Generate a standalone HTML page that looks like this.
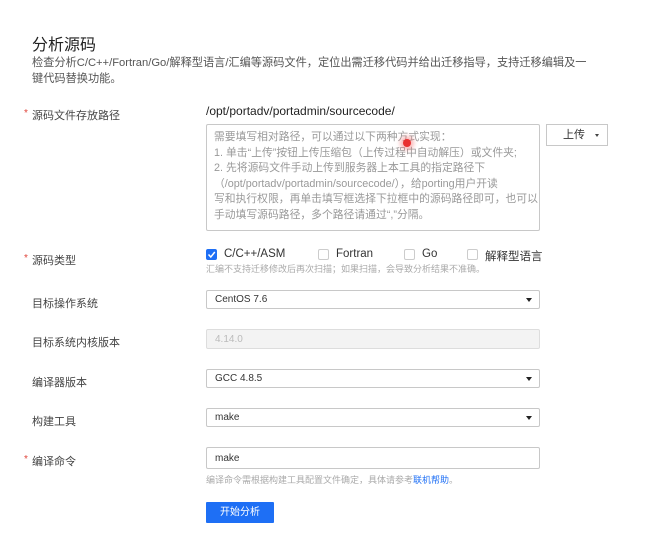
<!DOCTYPE html><html><head><meta charset="utf-8"><style>
*{margin:0;padding:0;box-sizing:border-box}
body{width:652px;height:539px;background:#fff;font-family:"Liberation Sans","Noto Sans CJK SC",sans-serif;color:#333;position:relative;overflow:hidden}
.a{position:absolute;white-space:nowrap}
.lab{font-size:11px;color:#444;left:32px}
.star{position:absolute;left:-8px;color:#e0453b;font-size:10px;top:1px}
.box{position:absolute;left:206px;width:334px;border:1px solid #c8c8c8;border-radius:2px;font-size:10px;color:#333;padding-left:8px;background:#fff;display:flex;align-items:center}
.arr{position:absolute;right:7px;top:7px;width:0;height:0;border-left:3px solid transparent;border-right:3px solid transparent;border-top:4px solid #222}
.cb{position:absolute;width:11px;height:11px;border:1px solid #ccc;border-radius:2px;background:#fff}
.ck{position:absolute;font-size:11.5px;color:#333;top:248px}
</style></head><body>
<div class="a" style="left:32px;top:31px;font-size:16px;color:#222">分析源码</div>
<div class="a" style="left:32px;top:55px;font-size:11.2px;color:#555;line-height:16px">检查分析C/C++/Fortran/Go/解释型语言/汇编等源码文件，定位出需迁移代码并给出迁移指导，支持迁移编辑及一<br>键代码替换功能。</div>
<div class="a lab" style="top:107px"><span class="star">*</span>源码文件存放路径</div>
<div class="a" style="left:206px;top:104px;font-size:12px;color:#222">/opt/portadv/portadmin/sourcecode/</div>
<div class="a" style="left:206px;top:124px;width:334px;height:107px;border:1px solid #c8c8c8;border-radius:2px;padding:5px 7px;font-size:10.8px;color:#999;line-height:15.6px;overflow:hidden">需要填写相对路径，可以通过以下两种方式实现：<br>1. 单击“上传”按钮上传压缩包（上传过程中自动解压）或文件夹;<br>2. 先将源码文件手动上传到服务器上本工具的指定路径下<br>（/opt/portadv/portadmin/sourcecode/），给porting用户开读<br>写和执行权限，再单击填写框选择下拉框中的源码路径即可，也可以<br>手动填写源码路径，多个路径请通过“,”分隔。</div>
<div class="a" style="left:403px;top:139px;width:8px;height:8px;border-radius:50%;background:#e83030;box-shadow:0 0 4px 3px rgba(240,80,80,.4)"></div>
<div class="a" style="left:546px;top:124px;width:62px;height:22px;border:1px solid #c8c8c8;font-size:11px;line-height:20px;padding-left:16px">上传<span style="position:absolute;right:8px;top:9px;border-left:2.5px solid transparent;border-right:2.5px solid transparent;border-top:3.5px solid #444"></span></div>
<div class="a lab" style="top:252px"><span class="star">*</span>源码类型</div>
<div class="cb" style="left:206px;top:249px;background:#1e6ff5;border-color:#1e6ff5"><svg width="9" height="9" style="position:absolute;left:0;top:0"><path d="M1.5 4.5L3.8 7L7.8 2" stroke="#fff" stroke-width="1.5" fill="none"/></svg></div>
<div class="ck" style="left:224px">C/C++/ASM</div>
<div class="cb" style="left:318px;top:249px"></div><div class="ck" style="left:336px">Fortran</div>
<div class="cb" style="left:404px;top:249px"></div><div class="ck" style="left:422px">Go</div>
<div class="cb" style="left:467px;top:249px"></div><div class="ck" style="left:485px">解释型语言</div>
<div class="a" style="left:206px;top:262px;font-size:9px;color:#aaa">汇编不支持迁移修改后再次扫描；如果扫描，会导致分析结果不准确。</div>
<div class="a lab" style="top:295px">目标操作系统</div>
<div class="box" style="top:290px;height:19px">CentOS 7.6<span class="arr"></span></div>
<div class="a lab" style="top:334px">目标系统内核版本</div>
<div class="box" style="top:329px;height:20px;background:#f3f3f3;border-color:#ddd;color:#bbb">4.14.0</div>
<div class="a lab" style="top:374px">编译器版本</div>
<div class="box" style="top:369px;height:19px">GCC 4.8.5<span class="arr"></span></div>
<div class="a lab" style="top:413px">构建工具</div>
<div class="box" style="top:408px;height:19px">make<span class="arr"></span></div>
<div class="a lab" style="top:453px"><span class="star">*</span>编译命令</div>
<div class="box" style="top:447px;height:22px">make</div>
<div class="a" style="left:206px;top:473px;font-size:9px;color:#aaa">编译命令需根据构建工具配置文件确定，具体请参考<span style="color:#1e6ff5">联机帮助</span>。</div>
<div class="a" style="left:206px;top:502px;width:68px;height:21px;background:#1e6ff5;color:#fff;font-size:10px;text-align:center;line-height:21px;border-radius:1px">开始分析</div>
</body></html>
